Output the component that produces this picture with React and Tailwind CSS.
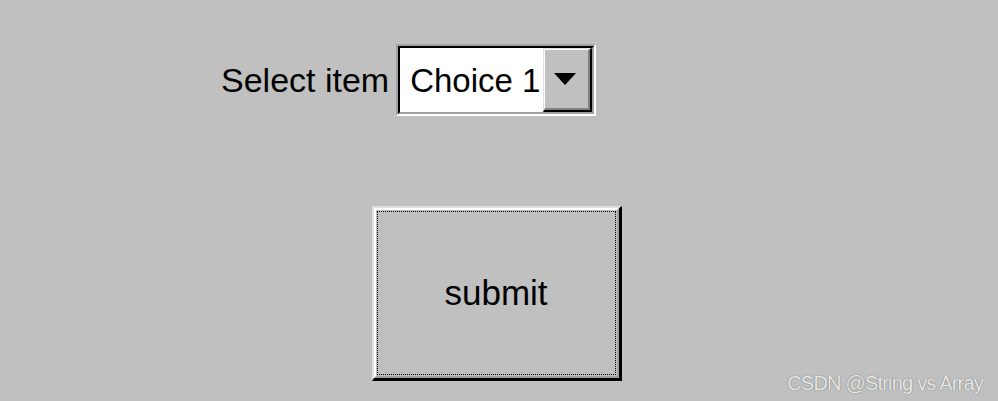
export default function App() {
  return (
    <div
      className="relative w-full h-[401px] bg-[#c0c0c0] overflow-hidden text-black"
      style={{ fontFamily: '"Liberation Sans", Arial, sans-serif' }}
    >
      <div className="flex flex-col pl-[221px] pt-[44px]">
        <div className="flex items-center">
          <span className="text-[34px] leading-none mr-[7px]">Select item</span>
          <div className="flex w-[200px] h-[72px] border-2 border-t-[#a0a0a0] border-l-[#a0a0a0] border-b-white border-r-white">
            <div className="flex flex-1 border-2 border-t-black border-l-black border-b-[#a0a0a0] border-r-[#a0a0a0] bg-white">
              <div className="flex-1 flex items-center pl-[10px] text-[33px] leading-none overflow-hidden whitespace-nowrap">
                Choice 1
              </div>
              <div className="flex w-[49px] border-t border-l border-t-[#e0e0e0] border-l-[#e0e0e0] border-b-2 border-r-2 border-b-black border-r-black">
                <div className="flex flex-1 items-center justify-center bg-[#c0c0c0] border-t border-l border-t-white border-l-white border-b-2 border-r-2 border-b-[#808080] border-r-[#808080]">
                  <svg width="22" height="12" viewBox="0 0 22 12" className="-ml-[3px]">
                    <polygon points="0,0 22,0 11,12" fill="#000" />
                  </svg>
                </div>
              </div>
            </div>
          </div>
        </div>
      </div>

      <div className="pl-[372px] mt-[90px]">
        <div className="flex w-[250px] h-[175px] border-t-2 border-l-2 border-t-[#e0e0e0] border-l-[#e0e0e0] border-b-[3px] border-r-[3px] border-b-black border-r-black">
          <div className="flex flex-1 p-[1px] border-t-2 border-l-2 border-t-white border-l-white border-b-2 border-r-2 border-b-[#a0a0a0] border-r-[#a0a0a0]">
            <div className="flex flex-1 items-center justify-center border border-dotted border-black">
              <span className="text-[35px] leading-none -mt-[2px] -ml-[1px]">submit</span>
            </div>
          </div>
        </div>
      </div>

      <div
        className="absolute right-[15px] bottom-[8px] text-[20px] leading-none tracking-[-0.8px] text-[#e8e8e8]"
        style={{ textShadow: '0 0 1px #7a7a7a, 0 0 1px #7a7a7a' }}
      >
        CSDN @String vs Array
      </div>
    </div>
  );
}
